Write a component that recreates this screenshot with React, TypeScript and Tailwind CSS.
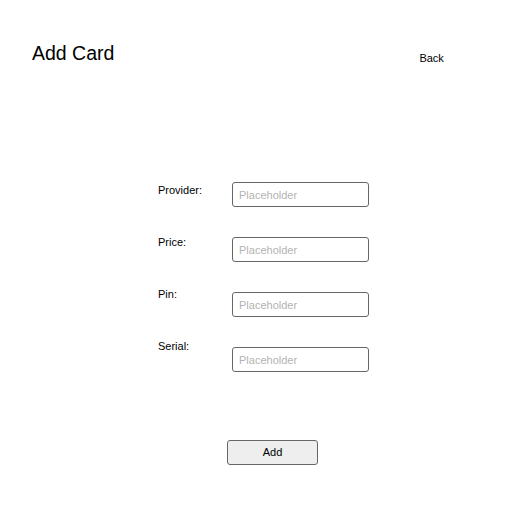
import React from "react";

const labels = ["Provider:", "Price:", "Pin:", "Serial:"];

export default function App() {
  return (
    <div
      className="w-[532px] h-[506px] bg-white text-black"
      style={{ fontFamily: '"Liberation Sans", Arial, sans-serif' }}
    >
      <div className="flex items-start h-[65px] pt-[41px] pl-[32px]">
        <h1 className="text-[19.5px] leading-[24px] font-normal">Add Card</h1>
        <button className="ml-[305px] mt-[11px] text-[11px] leading-[13px] text-black bg-transparent">
          Back
        </button>
      </div>
      <div className="flex mt-[117px] pl-[158px]">
        <div className="flex flex-col gap-[39px] w-[74px] pt-[2px]">
          {labels.map((l) => (
            <div key={l} className="text-[11px] leading-[13px]">
              {l}
            </div>
          ))}
        </div>
        <div className="flex flex-col gap-[30px]">
          {labels.map((l) => (
            <input
              key={l}
              placeholder="Placeholder"
              className="w-[137px] h-[25px] border border-[#666] rounded-[3px] px-[6px] text-[11px] outline-none placeholder:text-[#b3b3b3] bg-white"
            />
          ))}
        </div>
      </div>
      <div className="mt-[67px] pl-[227px]">
        <button className="w-[91px] h-[25px] border border-[#666] rounded-[3px] bg-[#eeeeee] text-[11px] text-black">
          Add
        </button>
      </div>
    </div>
  );
}
